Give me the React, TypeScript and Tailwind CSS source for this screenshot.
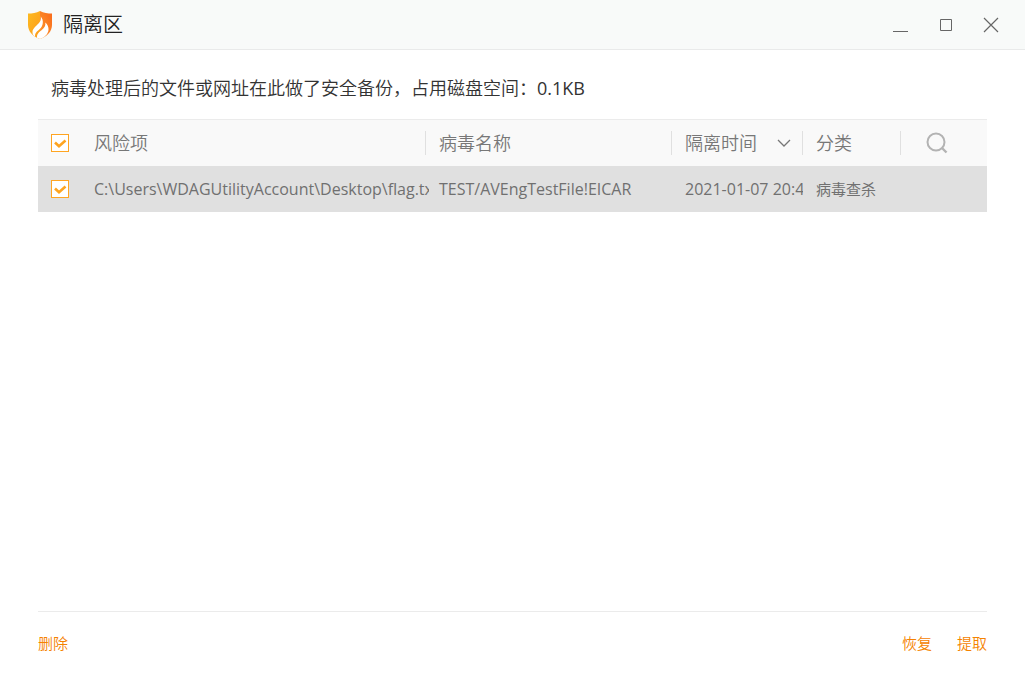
import * as React from "react";

interface QuarantineItem {
  path: string;
  virus: string;
  time: string;
  category: string;
}

const items: QuarantineItem[] = [
  {
    path: "C:\\Users\\WDAGUtilityAccount\\Desktop\\flag.txt",
    virus: "TEST/AVEngTestFile!EICAR",
    time: "2021-01-07 20:41",
    category: "病毒查杀",
  },
];

function Logo() {
  return (
    <svg width="24" height="28" viewBox="0 0 24 28" aria-hidden="true">
      <defs>
        <linearGradient id="shield-left" x1="0" y1="0" x2="1" y2="1">
          <stop offset="0" stopColor="#fdbb21" />
          <stop offset="1" stopColor="#fc9a1c" />
        </linearGradient>
        <linearGradient id="shield-right" x1="0" y1="1" x2="1" y2="0">
          <stop offset="0" stopColor="#fd9a2c" />
          <stop offset="1" stopColor="#f9691c" />
        </linearGradient>
      </defs>
      <path
        d="M12 0C8.500 2 4 2.600 0 2.600V14c0 6.500 5 11.500 12 14z"
        fill="url(#shield-left)"
      />
      <path
        d="M12 0c3.500 2 8 2.600 12 2.600V14c0 6.500-5 11.500-12 14z"
        fill="url(#shield-right)"
      />
      <path
        d="M12.700 5.500c.8 3.800-1 6-3.700 8.500C6 16.700 4 19 4.500 22c.3 1.800 1.300 3 2.700 3.700C6.600 22.500 8.600 20.700 11.500 18.300 15.500 15 16 9 12.700 5.500z"
        fill="#fff"
      />
      <path
        d="M17.300 11.500c.6 3.500-1 5.500-3.800 7.700-2.700 2.200-4.700 3.800-4.500 7.600L12 28c5-1.800 8-5 8.500-9 .3-2.800-.9-5.500-3.200-7.500z"
        fill="#fff"
      />
    </svg>
  );
}

interface CheckboxProps {
  label: string;
  checked: boolean;
  onChange: (checked: boolean) => void;
}

function Checkbox({ label, checked, onChange }: CheckboxProps) {
  return (
    <span className="relative block size-[18px]">
      <input
        type="checkbox"
        aria-label={label}
        checked={checked}
        onChange={(e) => onChange(e.target.checked)}
        className="peer block size-[18px] appearance-none border border-[#ffa522] bg-white"
      />
      <svg
        viewBox="0 0 18 18"
        className="pointer-events-none absolute inset-0 hidden size-[18px] peer-checked:block"
      >
        <path
          d="M4 8.500l4 3.700 6.500-5.700"
          fill="none"
          stroke="#fea420"
          strokeWidth="2.600"
        />
      </svg>
    </span>
  );
}

function HeaderCell({ children }: { children: React.ReactNode }) {
  return (
    <th scope="col" className="border-t border-[#ebebeb] p-0 text-left font-[350]">
      <div className="flex h-6 items-center justify-between border-l border-[#e0e0e0] pr-[11px] pl-[13px]">
        {children}
      </div>
    </th>
  );
}

function TitleBar() {
  return (
    <header className="flex h-[50px] items-center justify-between border-b border-[#e9eaea] bg-[#f8faf9] pr-4 pl-7 text-[#666]">
      <div className="flex items-center gap-[11px]">
        <Logo />
        <h1 className="text-xl font-[350] text-[#222]">隔离区</h1>
      </div>
      <div className="flex gap-[9px]">
        <button type="button" aria-label="最小化" className="grid size-9 place-items-center">
          <svg width="18" height="18" viewBox="0 0 18 18" stroke="currentColor">
            <path d="M1 15.500h15" />
          </svg>
        </button>
        <button type="button" aria-label="最大化" className="grid size-9 place-items-center">
          <svg width="18" height="18" viewBox="0 0 18 18" fill="none" stroke="currentColor">
            <path d="M3.500 3.500h11v11h-11z" />
          </svg>
        </button>
        <button type="button" aria-label="关闭" className="grid size-9 place-items-center">
          <svg width="18" height="18" viewBox="0 0 18 18" stroke="currentColor" strokeWidth="1.200">
            <path d="M2 2l14 14M16 2L2 16" />
          </svg>
        </button>
      </div>
    </header>
  );
}

export default function App() {
  const [selected, setSelected] = React.useState<boolean[]>(items.map(() => true));
  const allSelected = selected.every(Boolean);

  return (
    <div className="flex min-h-screen flex-col bg-white font-['Open_Sans','Noto_Sans_CJK_SC',sans-serif]">
      <TitleBar />
      <main className="flex-1 px-[38px]">
        <p className="px-[13px] pt-[25px] pb-[17px] text-lg/[27px] font-[350] text-[#333]">
          病毒处理后的文件或网址在此做了安全备份，占用磁盘空间：
          <span className="font-normal">0.1KB</span>
        </p>
        <table className="w-full table-fixed border-separate border-spacing-0">
          <colgroup>
            <col className="w-14" />
            <col />
            <col className="w-[246px]" />
            <col className="w-[131px]" />
            <col className="w-[98px]" />
            <col className="w-[87px]" />
          </colgroup>
          <thead>
            <tr className="h-[47px] bg-[#f9f9f9] text-lg/6 text-[#777]">
              <th scope="col" className="border-t border-[#ebebeb] p-0 pl-[13px]">
                <Checkbox
                  label="全选"
                  checked={allSelected}
                  onChange={(value) => setSelected(items.map(() => value))}
                />
              </th>
              <th scope="col" className="border-t border-[#ebebeb] p-0 text-left font-[350]">
                风险项
              </th>
              <HeaderCell>病毒名称</HeaderCell>
              <HeaderCell>
                隔离时间
                <button type="button" aria-label="排序">
                  <svg width="14" height="14" viewBox="0 0 14 14" fill="none" stroke="#777" strokeWidth="1.300">
                    <path d="M1 4l6 6 6-6" />
                  </svg>
                </button>
              </HeaderCell>
              <HeaderCell>分类</HeaderCell>
              <th scope="col" className="border-t border-[#ebebeb] p-0">
                <div className="flex h-6 items-center border-l border-[#e0e0e0] pl-[25px]">
                  <button type="button" aria-label="搜索">
                    <svg width="22" height="22" viewBox="0 0 22 22" fill="none" stroke="#b3b3b3" strokeWidth="2">
                      <circle cx="10" cy="10" r="8.500" />
                      <path d="M16 16l4.500 4.500" strokeWidth="2.400" />
                    </svg>
                  </button>
                </div>
              </th>
            </tr>
          </thead>
          <tbody>
            {items.map((item, index) => (
              <tr key={item.path} className="h-[46px] bg-[#e0e0e0] text-base font-[370] text-[#707070]">
                <td className="p-0 pl-[13px]">
                  <Checkbox
                    label={item.path}
                    checked={selected[index]}
                    onChange={(value) =>
                      setSelected(selected.map((s, i) => (i === index ? value : s)))
                    }
                  />
                </td>
                <td className="p-0">
                  <div className="-mr-1 overflow-hidden whitespace-nowrap">{item.path}</div>
                </td>
                <td className="overflow-hidden p-0 pl-[14px] whitespace-nowrap">{item.virus}</td>
                <td className="p-0 pl-[14px]">
                  <div className="-mr-px overflow-hidden whitespace-nowrap">{item.time}</div>
                </td>
                <td className="overflow-hidden p-0 pl-[14px] text-[15px] whitespace-nowrap">
                  {item.category}
                </td>
                <td className="p-0" />
              </tr>
            ))}
          </tbody>
        </table>
      </main>
      <footer className="mx-[38px] flex h-16 items-center justify-between border-t border-[#ebebeb] text-[15px] text-[#f58200]">
        <button type="button" className="font-[350]">删除</button>
        <div className="flex gap-[25px] font-[350]">
          <button type="button">恢复</button>
          <button type="button">提取</button>
        </div>
      </footer>
    </div>
  );
}
